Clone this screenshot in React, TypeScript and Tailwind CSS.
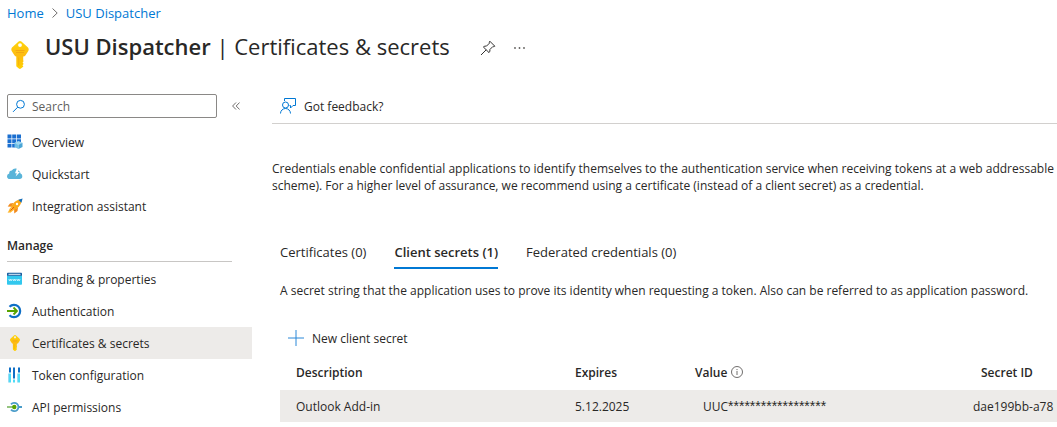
import type { ReactNode } from "react";

function KeyIcon({ className }: { className: string }) {
  return (
    <svg viewBox="0 0 18 28" className={className} aria-hidden="true">
      <defs>
        <linearGradient id="keyFill" x1="0" y1="0" x2="0" y2="1">
          <stop offset="0" stopColor="#ffd60a" />
          <stop offset="0.5" stopColor="#fdbb12" />
          <stop offset="1" stopColor="#ffd000" />
        </linearGradient>
      </defs>
      <path
        fill="url(#keyFill)"
        fillRule="evenodd"
        d="M7.600.600 1 6.600Q-.400 8.500 1 10.600L3.600 14.400Q4.200 15.200 5.300 15.400v9.400q0 .6.4 1l2.200 1.800q1 .7 2 0l2.200-1.800q.3-.4 0-.8l-.7-.8 1-1q.3-.4 0-.8l-.8-.9.8-.9q.3-.4 0-.8l-.2-.5V15.400q1.600-.2 2.200-1L17 10.600q1.400-2.100 0-4L10.400.600Q9-.600 7.600.600ZM9 2.200a1.900 1.900 0 1 1 0 3.800 1.900 1.900 0 0 1 0-3.800Z"
      />
      <path stroke="#f3a712" d="M4.500 9.500h9M5 11.500h8" fill="none" />
      <path stroke="#f5b00a" d="M7.700 16.500v8" fill="none" />
    </svg>
  );
}

function OverviewIcon() {
  return (
    <svg viewBox="0 0 16 16" className="size-4" aria-hidden="true">
      <path
        fill="#1a6fd0"
        d="M.500.500h4v4h-4zM5.200.500h4v4h-4zM9.900.500H14v4H9.900zM.500 5.200h4v4h-4zM5.200 5.200h4v4h-4zM9.900 5.200H14v4H9.900zM.500 9.900h4v3.600h-4zM5.200 9.900h3.300v3.600H5.200z"
      />
      <path fill="#9fd9f2" d="m11.500 7 4 1.800-4 2-4-2z" />
      <path fill="#6fbfe6" d="m7.500 8.800 4 2V15l-4-2z" />
      <path fill="#4ba6d6" d="m15.500 8.800-4 2V15l4-2z" />
    </svg>
  );
}

function QuickstartIcon() {
  return (
    <svg viewBox="0 0 16 16" className="size-4" aria-hidden="true">
      <path
        fill="#59b4d9"
        d="M3 13A2.900 2.900 0 0 1 0 10.200 2.800 2.800 0 0 1 2.200 7.500 2.800 2.800 0 0 1 4.800 4.500 4.300 4.300 0 0 1 12.500 5.500 2.800 2.800 0 0 1 13.500 7.600 2.700 2.700 0 0 1 15.300 10.300 2.700 2.700 0 0 1 12.600 13Z"
      />
      <path fill="#fff" d="M9.600 3h2.600l-1.200 3h2L8.600 10.500l1.200-3.300H8z" />
    </svg>
  );
}

function RocketIcon() {
  return (
    <svg viewBox="0 0 16 16" className="size-4" aria-hidden="true">
      <path fill="#f28a1c" d="M6.500 5 3 5.400.700 8.600l3.600.2zM11 9.500l-.5 3.600-3.200 2.300-.2-3.800z" />
      <path fill="#fba91a" d="M13.600 1.200C9.200 2 5.400 5.200 3.800 9.200l3 3c4-1.600 6.800-4.800 7.800-8.800z" />
      <path fill="#ffb52b" d="M3.300 9.400.600 14.900l1.800-.6.5.8 4.200-3.300z" />
      <path fill="#0f6cbd" d="M15.600.400 11.400 1.700l3 3z" />
      <path fill="#fff" d="M10 4.800a1.200 1.200 0 1 1 0 2.400 1.200 1.200 0 0 1 0-2.400Z" />
      <path stroke="#e05a10" d="m3.500 12.500 3.500-3.500" />
    </svg>
  );
}

function BrandingIcon() {
  return (
    <svg viewBox="0 0 16 16" className="size-4" aria-hidden="true">
      <path fill="#32c8ee" d="M0 4.500h15V13q0 .8-.8.8H.8q-.8 0-.8-.8z" />
      <path fill="#155a9c" d="M.8 1.800h13.400q.8 0 .8.8v2.100H0V2.600q0-.8.800-.8Z" />
      <path fill="#e6f3fb" d="M1.500 2.800h12v1h-12z" />
      <path
        fill="none"
        stroke="#d6f7ff"
        strokeWidth=".8"
        d="m1.800 8 .8 2 .8-2 .8 2 .8-2m.8 0 .8 2 .8-2 .8 2 .8-2m.8 0 .8 2 .8-2 .8 2 .8-2"
      />
    </svg>
  );
}

function AuthenticationIcon() {
  return (
    <svg viewBox="0 0 16 16" className="size-4" aria-hidden="true" fill="none">
      <path stroke="#0f6fc6" strokeWidth="2.200" d="M2.500 3.700A6.200 6.200 0 1 1 2.500 12.300" />
      <path stroke="#57a300" strokeWidth="1.800" d="M0 8h9.700M6.500 4.500 10 8 6.500 11.500" />
    </svg>
  );
}

function TokenIcon() {
  return (
    <svg viewBox="0 0 16 16" className="size-4" aria-hidden="true">
      <path fill="#0f6fc6" d="M2 .500h2v5H2zM6 .500h2v11H6zM11 .500h2v5h-2z" />
      <path fill="#50dcf5" d="M2 6.500h2v9H2zM6 12.500h2v3H6zM11 6.500h2v9h-2z" />
      <path fill="#9adcf5" d="M1 6.500h1v9H1zM10 6.500h1v9h-1z" />
    </svg>
  );
}

function ApiIcon() {
  return (
    <svg viewBox="0 0 16 16" className="size-4" aria-hidden="true" fill="none">
      <path stroke="#4a9cc9" strokeWidth="1.800" d="M4 5.300a4.200 4.200 0 1 1 0 5.400M11.700 8H15" />
      <path stroke="#7bb661" strokeWidth="1.600" d="M0 8h7" />
      <circle cx="7.300" cy="8" r="2.200" fill="#57a300" />
    </svg>
  );
}

function NavItem({ icon, label, active }: { icon: ReactNode; label: string; active?: boolean }) {
  return (
    <li>
      <a
        href="#"
        aria-current={active ? "page" : undefined}
        className={
          active
            ? "flex h-8 items-center gap-[9px] bg-[#edebe9] pl-[7px]"
            : "flex h-8 items-center gap-[9px] pl-[7px] hover:bg-[#f3f2f1]"
        }
      >
        <span className="flex w-4 shrink-0 justify-center">{icon}</span>
        {label}
      </a>
    </li>
  );
}

function Sidebar() {
  return (
    <aside className="w-[252px] shrink-0">
      <div className="flex items-center gap-[11px] pl-[7px]">
        <label className="flex h-6 w-[210px] items-center gap-1.5 rounded-xs border border-[#8a8886] px-1">
          <svg viewBox="0 0 14 14" className="size-3.5 shrink-0" fill="none" stroke="#0078d4" aria-hidden="true">
            <circle cx="8.500" cy="5.300" r="3.900" />
            <path d="M5.700 8.200 1 12.900" />
          </svg>
          <input
            type="search"
            aria-label="Search"
            placeholder="Search"
            className="w-full min-w-0 bg-transparent outline-none placeholder:text-[#605e5c]"
          />
        </label>
        <button type="button" aria-label="Collapse menu" className="flex size-4 items-center justify-center">
          <svg viewBox="0 0 8 8" className="size-2" fill="none" stroke="#605e5c" strokeWidth=".9" aria-hidden="true">
            <path d="M4 .500.600 4 4 7.500M7.600.500 4.200 4l3.400 3.500" />
          </svg>
        </button>
      </div>
      <nav aria-label="Resource menu" className="pt-2">
        <ul>
          <NavItem icon={<OverviewIcon />} label="Overview" />
          <NavItem icon={<QuickstartIcon />} label="Quickstart" />
          <NavItem icon={<RocketIcon />} label="Integration assistant" />
        </ul>
        <h2 className="mr-5 ml-[7px] flex h-10 items-center border-b border-[#c8c6c4] pt-2 font-semibold">Manage</h2>
        <ul className="pt-px">
          <NavItem icon={<BrandingIcon />} label="Branding & properties" />
          <NavItem icon={<AuthenticationIcon />} label="Authentication" />
          <NavItem icon={<KeyIcon className="h-4 w-3" />} label="Certificates & secrets" active />
          <NavItem icon={<TokenIcon />} label="Token configuration" />
          <NavItem icon={<ApiIcon />} label="API permissions" />
        </ul>
      </nav>
    </aside>
  );
}

function SecretsTable() {
  return (
    <table className="w-full table-fixed text-left whitespace-nowrap">
      <colgroup>
        <col className="w-[279px]" />
        <col className="w-[120px]" />
        <col className="w-[286px]" />
        <col />
      </colgroup>
      <thead>
        <tr className="h-9">
          <th className="pl-4 font-semibold">Description</th>
          <th className="pl-4 font-semibold">Expires</th>
          <th className="pl-4 font-semibold">
            <span className="flex items-center gap-1">
              Value
              <svg viewBox="0 0 12 12" className="size-3" fill="none" stroke="#605e5c" strokeWidth=".9" aria-hidden="true">
                <circle cx="6" cy="6" r="5.500" />
                <path d="M6 5v4M6 3v1.100" />
              </svg>
            </span>
          </th>
          <th className="pl-4 font-semibold">Secret ID</th>
        </tr>
      </thead>
      <tbody>
        <tr className="h-8 bg-[#edebe9]">
          <td className="pl-4">Outlook Add-in</td>
          <td className="pl-4">5.12.2025</td>
          <td className="pl-6">
            UUC<span className="font-['Liberation_Sans',sans-serif] text-[14px]">******************</span>
          </td>
          <td className="pl-2">dae199bb-a78</td>
        </tr>
      </tbody>
    </table>
  );
}

export default function App() {
  return (
    <div className="overflow-hidden bg-white font-['Open_Sans','Noto_Sans',sans-serif] text-[12px] leading-[17px] text-[#292827]">
      <nav aria-label="Breadcrumb" className="flex h-[26px] items-center gap-2 pl-[7px] text-[13px] text-[#0078d4]">
        <a href="#">Home</a>
        <svg viewBox="0 0 6 10" className="h-2.5 w-1.5" fill="none" stroke="#605e5c" strokeWidth=".9" aria-hidden="true">
          <path d="m.500.500 4.700 4.500-4.700 4.500" />
        </svg>
        <a href="#">USU Dispatcher</a>
      </nav>
      <header className="flex h-[68px] items-start pl-[11px]">
        <KeyIcon className="mt-[15px] h-7 w-[18px] shrink-0" />
        <h1 className="ml-4 pt-1 text-[22px] leading-8 whitespace-nowrap">
          <span className="font-semibold">USU Dispatcher</span> | Certificates &amp; secrets
        </h1>
        <div className="flex items-center gap-4 pt-3.5 pl-[30px]">
          <button type="button" aria-label="Pin">
            <svg viewBox="0 0 16 16" className="size-4" fill="none" stroke="#323130" aria-hidden="true">
              <path d="M9.800 1.200 14.800 6.200 13.600 6.700 12.900 6.500 9.900 9.500Q10.300 11.300 9 12.600L3.400 7Q4.700 5.700 6.500 6.100L9.500 3.100 9.300 2.400ZM6.200 9.800 1 15" />
            </svg>
          </button>
          <button type="button" aria-label="More actions">
            <svg viewBox="0 0 16 16" className="size-4" fill="#605e5c" aria-hidden="true">
              <circle cx="3" cy="8" r=".9" />
              <circle cx="7.500" cy="8" r=".9" />
              <circle cx="12" cy="8" r=".9" />
            </svg>
          </button>
        </div>
      </header>
      <div className="flex">
        <Sidebar />
        <main className="ml-5 min-w-0 flex-1">
          <div className="flex h-[30px] items-start border-b border-[#d2d0ce] pl-2">
            <button type="button" className="flex h-6 items-center gap-2">
              <svg viewBox="0 0 16 16" className="size-4" fill="none" stroke="#0078d4" aria-hidden="true">
                <circle cx="5.500" cy="7" r="3" />
                <path d="M.500 15.500a5 5 0 0 1 10 0M4.500 3V.500h11v7H13L10.500 10V7.500H9.500" />
              </svg>
              Got feedback?
            </button>
          </div>
          <p className="pt-9 whitespace-nowrap">
            Credentials enable confidential applications to identify themselves to the authentication service when
            receiving tokens at a web addressable
            <br />
            scheme). For a higher level of assurance, we recommend using a certificate (instead of a client secret) as a
            credential.
          </p>
          <div className="pl-2">
            <div role="tablist" className="mt-11 flex gap-7 text-[13px]">
              <button type="button" role="tab" aria-selected="false" className="flex h-[31px] items-start pt-1.5">
                Certificates (0)
              </button>
              <button
                type="button"
                role="tab"
                aria-selected="true"
                className="flex h-[31px] items-start border-b-2 border-[#0078d4] pt-1.5 font-semibold"
              >
                Client secrets (1)
              </button>
              <button type="button" role="tab" aria-selected="false" className="flex h-[31px] items-start pt-1.5">
                Federated credentials (0)
              </button>
            </div>
            <p className="pt-[13px] whitespace-nowrap">
              A secret string that the application uses to prove its identity when requesting a token. Also can be
              referred to as application password.
            </p>
            <button type="button" className="mt-[23px] flex h-8 items-center gap-2 pl-2">
              <svg viewBox="0 0 16 16" className="size-4" fill="none" stroke="#2b88d8" aria-hidden="true">
                <path d="M8 0v16M0 8h16" />
              </svg>
              New client secret
            </button>
            <SecretsTable />
          </div>
        </main>
      </div>
    </div>
  );
}
